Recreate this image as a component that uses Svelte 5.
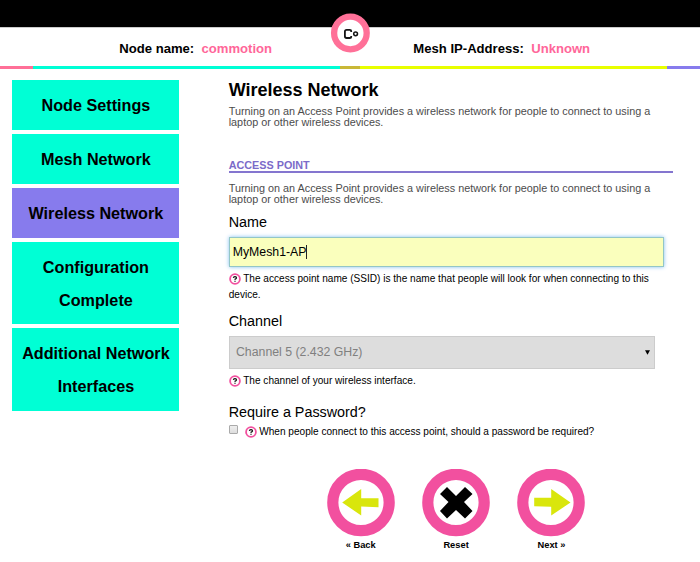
<script>
  const menu = [
    { lines: ['Node Settings'] },
    { lines: ['Mesh Network'] },
    { lines: ['Wireless Network'], active: true },
    { lines: ['Configuration', 'Complete'] },
    { lines: ['Additional Network', 'Interfaces'] }
  ];
  const actions = [
    { label: '« Back', shape: '15.2,33.5 34.2,20 34.2,29.2 51.5,29.2 51.5,38.2 34.2,37.5 34.2,46.5', color: '#d9e60c' },
    { label: 'Reset', shape: '25,18 34,27 43,18 50.5,25 42,33 50.5,42 43,49.5 34,41 25,49.5 18,42 26.5,33 18,25', color: '#000' },
    { label: 'Next »', shape: '53.5,33.5 34.2,20 34.2,28.8 17.2,28.8 17.2,37.2 34.2,37.8 34.2,46.5', color: '#d9e60c' }
  ];
  let apName = $state('MyMesh1-AP');
</script>

{#snippet help()}
  <svg class="help" width="12" height="12" viewBox="0 0 12 12">
    <circle cx="6" cy="6" r="4.9" fill="#fff" stroke="#f2509f" stroke-width="1.8" />
    <path d="M4.4 4.9Q4.5 3.7 6 3.7T7.5 4.9Q7.4 5.7 6 6.3V6.8M6 7.8V8.8" fill="none" stroke="#111" stroke-width="1.3" />
  </svg>
{/snippet}

<div class="page">
  <div class="topbar"></div>
  <header>
    <div class="info node"><span>Node name:</span><b>commotion</b></div>
    <div class="info ip"><span>Mesh IP-Address:</span><b>Unknown</b></div>
    <svg class="logo" width="40" height="40" viewBox="0 0 40 40">
      <circle cx="20.4" cy="20" r="16.3" fill="#fff" stroke="#ff7098" stroke-width="6.3" />
      <path d="M21.2 19V18Q21.2 16.9 19.8 16.9H16.6Q14.9 16.9 14.9 18.6V23.3Q14.9 25 16.6 25H19.8Q21.2 25 21.2 23.9V23" fill="none" stroke="#151515" stroke-width="1.8" />
      <circle cx="25.6" cy="20.8" r="1.9" fill="none" stroke="#151515" stroke-width="1.5" />
    </svg>
  </header>
  <div class="stripe"><i></i><i></i><i></i><i></i><i></i></div>

  <div class="columns">
    <nav>
      {#each menu as item}
        <div class="item" class:active={item.active} class:double={item.lines.length > 1}>
          {#each item.lines as line}<span>{line}</span>{/each}
        </div>
      {/each}
    </nav>

    <main>
      <h1>Wireless Network</h1>
      <p class="intro"><span>Turning on an Access Point provides a wireless network for people to connect to using a</span><br />laptop or other wireless devices.</p>
      <h2>ACCESS POINT</h2>
      <p class="intro"><span>Turning on an Access Point provides a wireless network for people to connect to using a</span><br />laptop or other wireless devices.</p>

      <label class="title name" for="ap">Name</label>
      <div class="field"><input id="ap" type="text" bind:value={apName} /><span class="caret"></span></div>
      <p class="hint first">{@render help()}The access point name (SSID) is the name that people will look for when connecting to this<br />device.</p>

      <div class="title channel">Channel</div>
      <div class="select"><span>Channel 5 (2.432 GHz)</span><svg width="5" height="5" viewBox="0 0 5 5"><path d="M0 .3H5L2.5 4.8Z" /></svg></div>
      <p class="hint second">{@render help()}The channel of your wireless interface.</p>

      <div class="title password">Require a Password?</div>
      <div class="check"><input type="checkbox" /><p class="hint">{@render help()}When people connect to this access point, should a password be required?</p></div>

      <div class="actions">
        {#each actions as action}
          <div class="action">
            <svg width="68" height="68" viewBox="0 0 68 68">
              <circle cx="34" cy="33.5" r="28.2" fill="#fff" stroke="#f2509f" stroke-width="11.2" />
              <polygon points={action.shape} fill={action.color} />
            </svg>
            <span>{action.label}</span>
          </div>
        {/each}
      </div>
    </main>
  </div>
</div>

<style>
  :global(body) { margin: 0; background: #fff; }
  .page { width: 700px; height: 562px; overflow: hidden; background: #fff; color: #000; font-family: "Liberation Sans", Arial, sans-serif; }
  .page * { box-sizing: border-box; }
  p, h1, h2 { margin: 0; }
  svg { display: block; }
  .topbar { height: 27px; background: #000; }
  header { position: relative; height: 39px; display: flex; border-top: 1px solid #ccc; }
  .info { display: flex; gap: 7.3px; font-weight: bold; font-size: 13.1px; line-height: 15px; padding-top: 13px; white-space: nowrap; }
  .info b { color: #ff6699; }
  .node { width: 294px; margin-left: 119.3px; }
  .logo { position: absolute; left: 330px; top: -15px; }
  .stripe { display: grid; grid-template-columns: 33px 307px 20px 307px 33px; height: 3px; }
  .stripe i:nth-child(1) { background: #ff7098; }
  .stripe i:nth-child(2) { background: #00ffd5; }
  .stripe i:nth-child(3) { background: #c9b837; }
  .stripe i:nth-child(4) { background: #e8ff00; }
  .stripe i:nth-child(5) { background: #877bed; }
  .columns { display: flex; padding: 11px 0 0 12px; }
  nav { width: 167px; display: flex; flex-direction: column; gap: 4px; }
  .item { height: 50px; padding: 9.4px 0 0 0.8px; background: #00ffd5; display: flex; flex-direction: column; align-items: center; font-weight: bold; font-size: 16.2px; line-height: 32.3px; white-space: nowrap; }
  .item.active { background: #877bed; }
  .item.double { height: 82.4px; }
  .item.double + .item.double { margin-top: -0.4px; height: 83px; }
  main { width: 444px; margin-left: 49.7px; }
  h1 { font-size: 18px; line-height: 20px; white-space: nowrap; }
  .intro { font-size: 10.83px; line-height: 11px; color: #4c4c4c; margin-top: 6px; white-space: nowrap; }
  h2 { margin-top: 32px; font-size: 10.8px; line-height: 11px; height: 13px; border-bottom: 2px solid #8475cf; color: #7b6bc9; }
  h2 + .intro { margin-top: 10px; }
  .title { display: block; font-size: 14.35px; line-height: 16px; }
  .name { margin-top: 9px; }
  .field { position: relative; width: 435px; height: 30px; margin-top: 7px; }
  .field input { display: block; width: 100%; height: 100%; padding: 0 3px 1px; border: 1px solid #93c6c6; border-radius: 0; outline: none; background: #faffbd; box-shadow: 0 0 4px #82bff0; color: #000; font: 12.3px "Liberation Sans", Arial, sans-serif; }
  .caret { position: absolute; left: 77px; top: 8px; width: 1px; height: 14px; background: #222; }
  .hint { font-size: 10.08px; line-height: 16px; white-space: nowrap; }
  .help { display: inline-block; vertical-align: -3px; margin-right: 2.5px; }
  .first { margin-top: 4px; }
  .channel { margin-top: 10px; }
  .select { width: 426.5px; height: 33px; margin-top: 7px; padding: 0 4px 1px 6.3px; display: flex; align-items: center; justify-content: space-between; background: #ddd; border: 1px solid #ccc; color: #808080; font-size: 12.3px; }
  .select svg { fill: #000; }
  .second { margin-top: 4px; }
  .password { margin-top: 15px; }
  .check { display: flex; height: 20px; margin-top: 4px; }
  .check input { appearance: none; width: 9px; height: 9px; margin: 1px 7px 0 0; border: 1px solid #aaa; border-radius: 1px; background: linear-gradient(#eee, #ddd); }
  .actions { display: flex; gap: 27.4px; margin: 25px 0 0 98px; }
  .action { width: 68px; display: flex; flex-direction: column; align-items: center; font-weight: bold; font-size: 9.3px; line-height: 11px; }
  .action span { margin-top: 3px; }
</style>
